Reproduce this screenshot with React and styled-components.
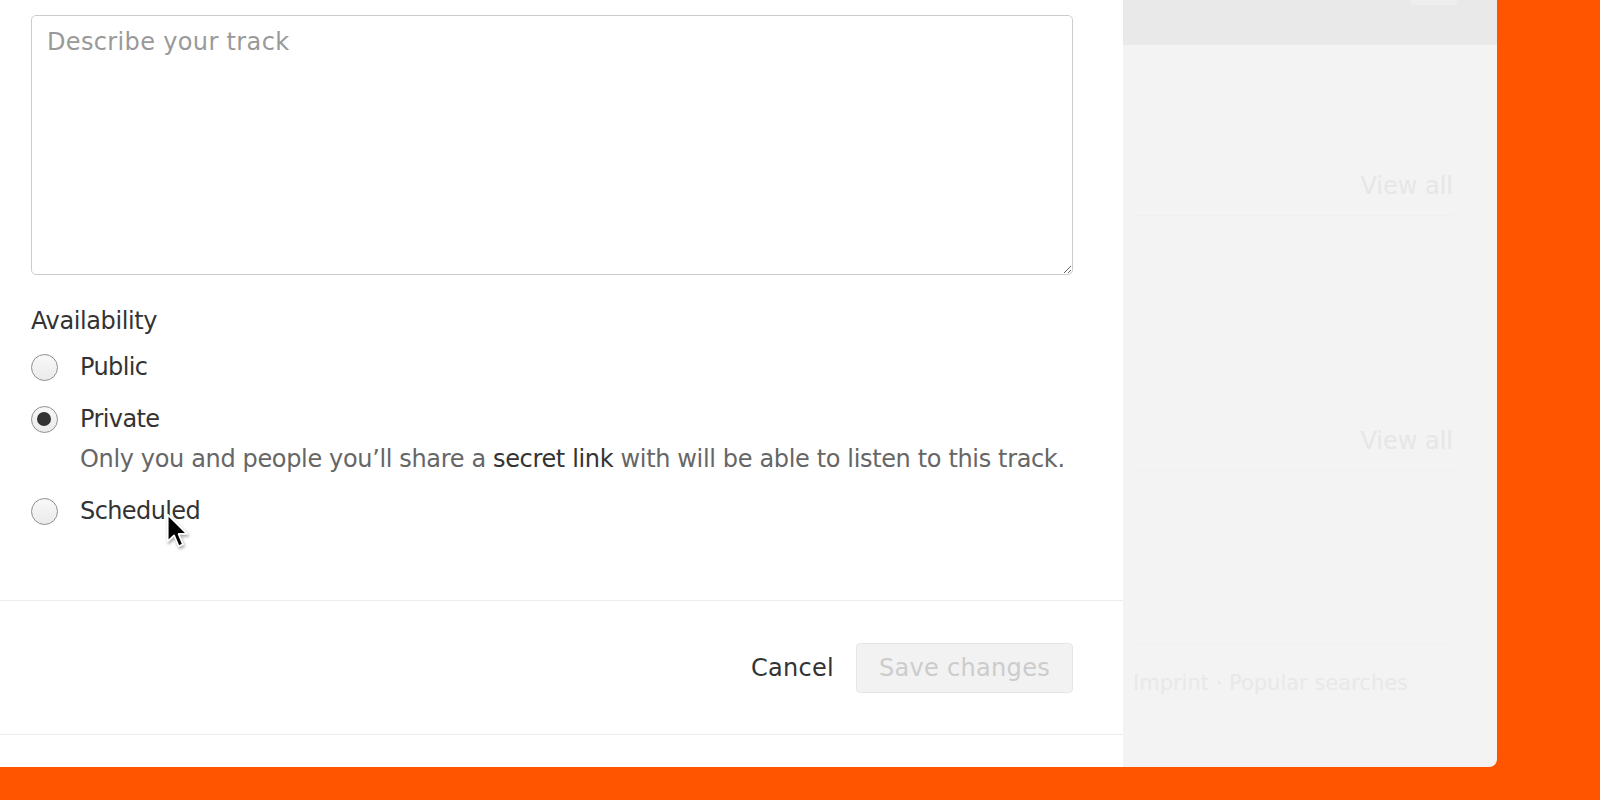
import React from "react";
import styled, { createGlobalStyle } from "styled-components";

const GlobalStyle = createGlobalStyle`
  html, body { margin: 0; padding: 0; }
  body {
    background: #ff5500;
    font-family: "DejaVu Sans", "Liberation Sans", sans-serif;
  }
  * { box-sizing: border-box; }
`;

const Page = styled.div`
  width: 1600px;
  height: 800px;
  background: #ff5500;
  display: flex;
  align-items: flex-start;
  overflow: hidden;
`;

const Window = styled.div`
  width: 1497px;
  height: 767px;
  display: flex;
  border-bottom-right-radius: 8px;
  overflow: hidden;
`;

const Modal = styled.div`
  width: 1123px;
  background: #fff;
  display: flex;
  flex-direction: column;
`;

const Body = styled.div`
  height: 600px;
  padding: 15px 50px 0 31px;
  display: flex;
  flex-direction: column;
`;

const Description = styled.textarea`
  width: 100%;
  height: 260px;
  border: 1px solid #cccccc;
  border-radius: 5px;
  padding: 11px 15px;
  font-family: "DejaVu Sans", sans-serif;
  font-size: 24px;
  line-height: 30px;
  letter-spacing: 0.35px;
  color: #333;
  resize: vertical;
  outline: none;
  &::placeholder { color: #999999; }
`;

const FieldLabel = styled.div`
  margin-top: 31px;
  font-size: 24px;
  line-height: 30px;
  letter-spacing: -0.4px;
  color: #333;
`;

const RadioList = styled.div`
  margin-top: 16px;
  display: flex;
  flex-direction: column;
  gap: 22px;
`;

const Option = styled.label`
  position: relative;
  display: grid;
  grid-template-columns: 26px 1fr;
  column-gap: 23px;
  row-gap: 10px;
  align-items: center;
`;

const RadioCircle = styled.span`
  width: 27px;
  height: 27px;
  margin-left: -0.5px;
  border-radius: 50%;
  border: 1.5px solid #8e8e8e;
  background: linear-gradient(#f8f8f8, #ebebeb);
  display: flex;
  align-items: center;
  justify-content: center;
  &::after {
    content: "";
    width: 14px;
    height: 14px;
    border-radius: 50%;
    background: #333;
    display: ${(p) => (p.$checked ? "block" : "none")};
  }
`;

const OptionText = styled.span`
  font-size: 24px;
  line-height: 30px;
  letter-spacing: -0.6px;
  color: #333;
`;

const OptionHint = styled.span`
  grid-column: 2;
  font-size: 24px;
  line-height: 30px;
  letter-spacing: -0.35px;
  color: #666;
  white-space: nowrap;
`;

const HintLink = styled.span`
  color: #333;
`;

const Pointer = styled.svg`
  position: absolute;
  left: 135px;
  top: 17px;
  width: 24px;
  height: 36px;
  filter: drop-shadow(1px 2px 1.5px rgba(0, 0, 0, 0.35));
`;

const Footer = styled.div`
  height: 135px;
  border-top: 1px solid #ececec;
  border-bottom: 1px solid #ececec;
  display: flex;
  align-items: center;
  justify-content: flex-end;
  gap: 22px;
  padding-right: 50px;
`;

const TextButton = styled.button`
  background: none;
  border: none;
  padding: 0;
  font-family: "DejaVu Sans", sans-serif;
  font-size: 24px;
  letter-spacing: 0.3px;
  color: #333;
`;

const PrimaryButton = styled.button`
  height: 50px;
  padding: 0 22px;
  border: 1px solid #e6e6e6;
  border-radius: 4px;
  background: #f2f2f2;
  color: #cccccc;
  font-family: "DejaVu Sans", sans-serif;
  font-size: 24px;
  letter-spacing: 0.3px;
`;

const Backdrop = styled.div`
  flex: 1;
  background: #f3f3f3;
  display: flex;
  flex-direction: column;
`;

const TopBand = styled.div`
  height: 45px;
  background: #e9e9e9;
  position: relative;
`;

const AvatarEdge = styled.div`
  position: absolute;
  right: 40px;
  top: 0;
  width: 46px;
  height: 5px;
  border-radius: 0 0 3px 3px;
  background: #eeeeee;
`;

const SectionHead = styled.div`
  margin-top: ${(p) => p.$gap}px;
  margin-left: 10px;
  margin-right: 44px;
  height: 60px;
  display: flex;
  align-items: center;
  justify-content: flex-end;
  border-bottom: 1px solid #efefef;
  font-size: 24px;
  color: #e6e6e6;
`;

const FooterLinks = styled.div`
  margin-top: 172px;
  margin-left: 10px;
  margin-right: 44px;
  border-top: 1px solid #efefef;
  padding-top: 27px;
  font-size: 21px;
  line-height: 24px;
  color: #e8e8e8;
`;

export default function App() {
  return (
    <>
      <GlobalStyle />
      <Page>
        <Window>
          <Modal>
            <Body>
              <Description placeholder="Describe your track" />
              <FieldLabel>Availability</FieldLabel>
              <RadioList>
                <Option>
                  <RadioCircle />
                  <OptionText>Public</OptionText>
                </Option>
                <Option>
                  <RadioCircle $checked />
                  <OptionText>Private</OptionText>
                  <OptionHint>
                    Only you and people you’ll share a <HintLink>secret link</HintLink> with will be able to listen to this track.
                  </OptionHint>
                </Option>
                <Option>
                  <RadioCircle />
                  <OptionText>Scheduled</OptionText>
                  <Pointer viewBox="0 0 14 21">
                    <path
                      d="M1 1 L1 16.5 L4.7 13 L7.4 19.4 L9.9 18.3 L7.3 12.2 L12.3 12.2 Z"
                      fill="#000"
                      stroke="#fff"
                      strokeWidth="1"
                      strokeLinejoin="round"
                    />
                  </Pointer>
                </Option>
              </RadioList>
            </Body>
            <Footer>
              <TextButton>Cancel</TextButton>
              <PrimaryButton disabled>Save changes</PrimaryButton>
            </Footer>
          </Modal>
          <Backdrop>
            <TopBand>
              <AvatarEdge />
            </TopBand>
            <SectionHead $gap={111}>View all</SectionHead>
            <SectionHead $gap={195}>View all</SectionHead>
            <FooterLinks>Imprint · Popular searches</FooterLinks>
          </Backdrop>
        </Window>
      </Page>
    </>
  );
}
